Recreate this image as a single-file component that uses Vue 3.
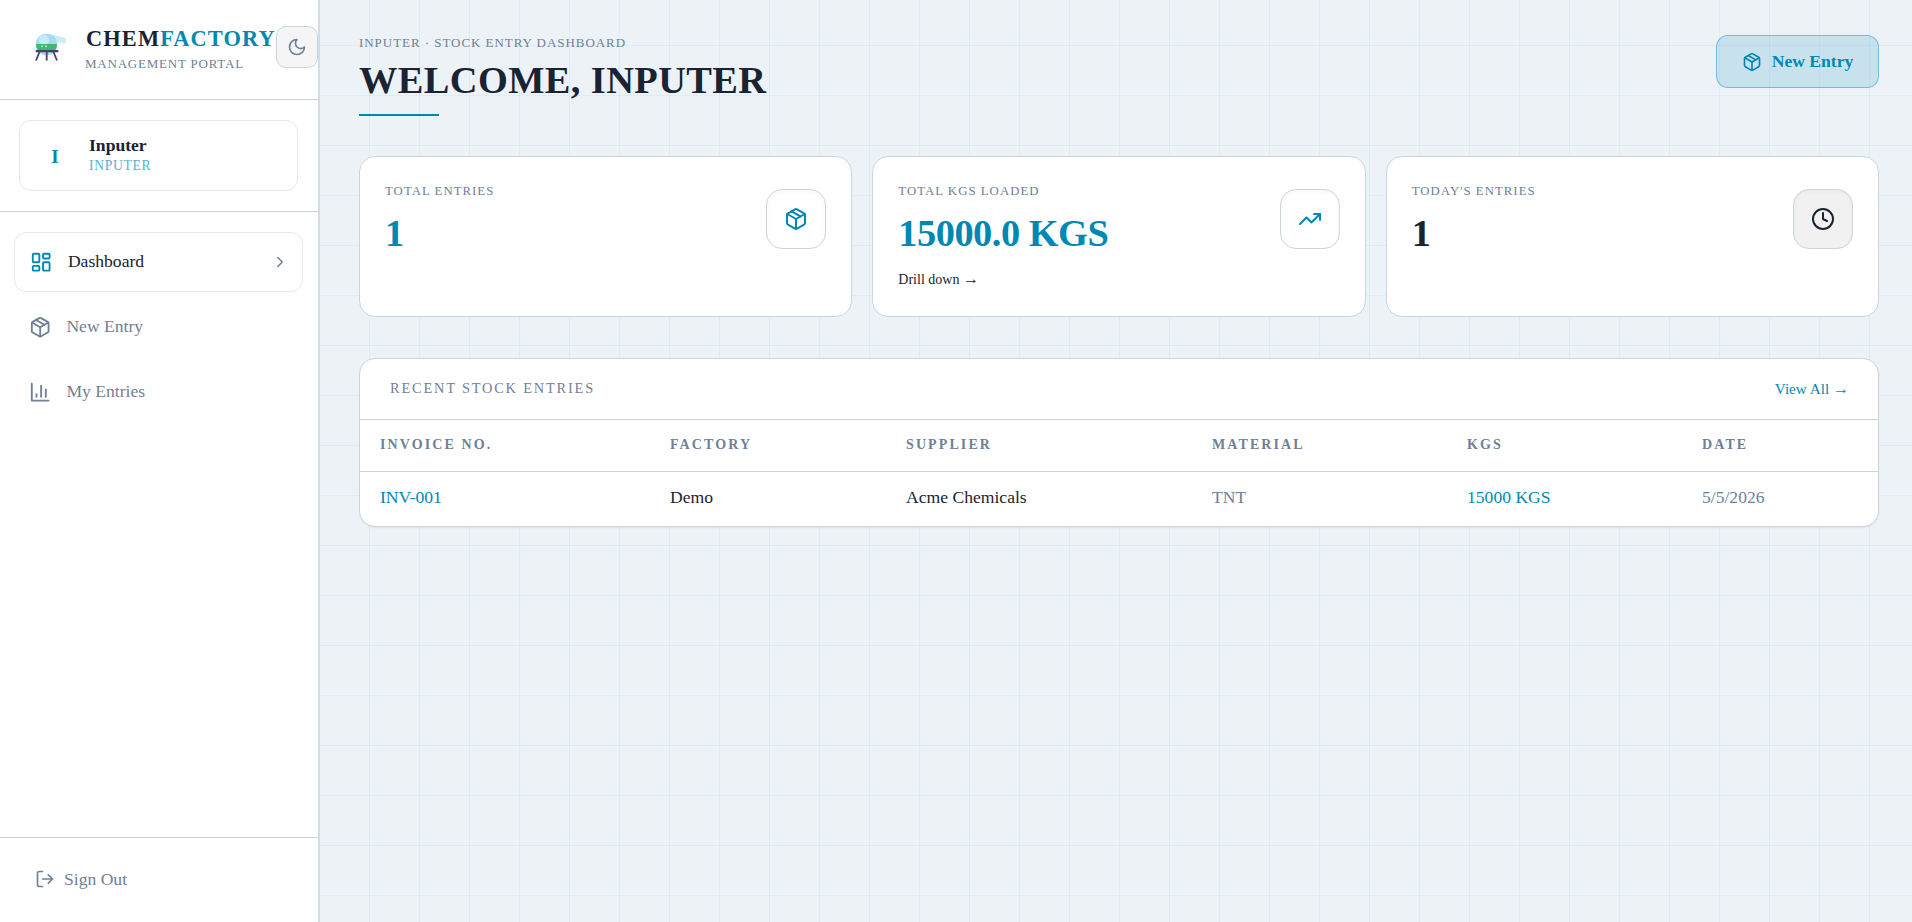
<template>
  <div class="layout">
    <aside class="sidebar">
      <div class="brand">
        <!-- flask logo -->
        <svg class="logo" viewBox="0 0 31 30" width="31" height="30">
          <path d="M15 1 L30.6 5 L30.6 10.5 L21 9 Z" fill="#c9eefa" />
          <circle cx="11.5" cy="11.5" r="10.8" fill="#a5dcf3" />
          <circle cx="9" cy="7" r="5" fill="#c6ebf8" />
          <path d="M1 11 H22 A10.8 10.8 0 0 1 20 17.5 H3 A10.8 10.8 0 0 1 1 11 Z" fill="#3cb96c" />
          <rect x="6" y="12.5" width="2" height="1.6" fill="#b9ecc4" />
          <rect x="10" y="12.5" width="2" height="1.6" fill="#b9ecc4" />
          <rect x="0.7" y="17" width="22.6" height="2.3" fill="#4b3f72" />
          <path d="M4.5 19 L1 27.5 M18.5 19 L22 27.5 M11.7 19 V27.5" stroke="#4b3f72" stroke-width="1.8" fill="none" />
        </svg>
        <div class="brand-text">
          <div class="brand-name">CHEM<span class="accent">FACTORY</span></div>
          <div class="brand-sub">MANAGEMENT PORTAL</div>
        </div>
        <button class="theme-btn">
          <svg class="ico" width="20" height="20" viewBox="0 0 24 24"><path d="M12 3a6 6 0 0 0 9 9 9 9 0 1 1-9-9Z" /></svg>
        </button>
      </div>

      <div class="user-wrap">
        <div class="user-card">
          <div class="avatar">I</div>
          <div>
            <div class="user-name">Inputer</div>
            <div class="user-role">INPUTER</div>
          </div>
        </div>
      </div>

      <nav class="nav">
        <a v-for="item in navItems" :key="item.label" class="nav-item" :class="{ active: item.active }">
          <svg class="ico nav-ico" width="22.4" height="22.4" viewBox="0 0 24 24">
            <path v-for="d in icons[item.icon]" :key="d" :d="d" />
          </svg>
          <span class="nav-label">{{ item.label }}</span>
          <svg v-if="item.active" class="ico chevron" width="18" height="18" viewBox="0 0 24 24"><path d="m9 18 6-6-6-6" /></svg>
        </a>
      </nav>

      <div class="signout">
        <svg class="ico" width="20" height="20" viewBox="0 0 24 24">
          <path d="M9 21H5a2 2 0 0 1-2-2V5a2 2 0 0 1 2-2h4" />
          <path d="m16 17 5-5-5-5" />
          <path d="M21 12H9" />
        </svg>
        <span>Sign Out</span>
      </div>
    </aside>

    <main class="main">
      <header class="page-head">
        <div>
          <div class="crumb">INPUTER · STOCK ENTRY DASHBOARD</div>
          <h1 class="title">WELCOME, INPUTER</h1>
          <div class="title-line"></div>
        </div>
        <button class="new-btn">
          <svg class="ico" width="20" height="20" viewBox="0 0 24 24">
            <path v-for="d in icons.package" :key="d" :d="d" />
          </svg>
          New Entry
        </button>
      </header>

      <section class="stats">
        <div v-for="card in stats" :key="card.label" class="stat-card">
          <div>
            <div class="stat-label">{{ card.label }}</div>
            <div class="stat-value" :class="card.tone">{{ card.value }}</div>
            <div v-if="card.drill" class="drill">Drill down <span class="arrow">→</span></div>
          </div>
          <div class="stat-icon" :class="card.tone">
            <svg class="ico" width="24" height="24" viewBox="0 0 24 24">
              <path v-for="d in icons[card.icon]" :key="d" :d="d" />
            </svg>
          </div>
        </div>
      </section>

      <section class="recent">
        <div class="recent-head">
          <span class="recent-title">RECENT STOCK ENTRIES</span>
          <a class="view-all">View All <span class="arrow">→</span></a>
        </div>
        <table class="entries">
          <colgroup>
            <col style="width: 290px" />
            <col style="width: 236px" />
            <col style="width: 306px" />
            <col style="width: 255px" />
            <col style="width: 235px" />
            <col />
          </colgroup>
          <thead>
            <tr>
              <th v-for="h in columns" :key="h">{{ h }}</th>
            </tr>
          </thead>
          <tbody>
            <tr v-for="row in rows" :key="row.invoice">
              <td class="teal">{{ row.invoice }}</td>
              <td>{{ row.factory }}</td>
              <td>{{ row.supplier }}</td>
              <td class="muted">{{ row.material }}</td>
              <td class="teal">{{ row.kgs }}</td>
              <td class="muted">{{ row.date }}</td>
            </tr>
          </tbody>
        </table>
      </section>
    </main>
  </div>
</template>

<script setup>
const icons = {
  dashboard: [
    'M4 3h5a1 1 0 0 1 1 1v7a1 1 0 0 1-1 1H4a1 1 0 0 1-1-1V4a1 1 0 0 1 1-1Z',
    'M15 3h5a1 1 0 0 1 1 1v3a1 1 0 0 1-1 1h-5a1 1 0 0 1-1-1V4a1 1 0 0 1 1-1Z',
    'M15 12h5a1 1 0 0 1 1 1v7a1 1 0 0 1-1 1h-5a1 1 0 0 1-1-1v-7a1 1 0 0 1 1-1Z',
    'M4 16h5a1 1 0 0 1 1 1v3a1 1 0 0 1-1 1H4a1 1 0 0 1-1-1v-3a1 1 0 0 1 1-1Z'
  ],
  package: [
    'm7.5 4.27 9 5.15',
    'M21 8a2 2 0 0 0-1-1.73l-7-4a2 2 0 0 0-2 0l-7 4A2 2 0 0 0 3 8v8a2 2 0 0 0 1 1.73l7 4a2 2 0 0 0 2 0l7-4A2 2 0 0 0 21 16Z',
    'm3.3 7 8.7 5 8.7-5',
    'M12 22V12'
  ],
  chart: ['M3 3v18h18', 'M18 17V9', 'M13 17V5', 'M8 17v-3'],
  trending: ['m22 7-8.5 8.5-5-5L2 17', 'M16 7h6v6'],
  clock: ['M12 2a10 10 0 1 0 0 20 10 10 0 0 0 0-20Z', 'M12 6v6l4 2']
}

const navItems = [
  { label: 'Dashboard', icon: 'dashboard', active: true },
  { label: 'New Entry', icon: 'package' },
  { label: 'My Entries', icon: 'chart' }
]

const stats = [
  { label: 'TOTAL ENTRIES', value: '1', icon: 'package', tone: 'teal' },
  { label: 'TOTAL KGS LOADED', value: '15000.0 KGS', icon: 'trending', tone: 'teal', drill: true },
  { label: "TODAY'S ENTRIES", value: '1', icon: 'clock', tone: 'dark' }
]

const columns = ['INVOICE NO.', 'FACTORY', 'SUPPLIER', 'MATERIAL', 'KGS', 'DATE']

const rows = [
  { invoice: 'INV-001', factory: 'Demo', supplier: 'Acme Chemicals', material: 'TNT', kgs: '15000 KGS', date: '5/5/2026' }
]
</script>

<style>
html,
body {
  margin: 0;
  overflow: hidden;
}
</style>

<style scoped>
.layout {
  display: flex;
  height: 922px;
  font-family: "Liberation Serif", "Times New Roman", serif;
  color: #1a2332;
}

.ico {
  fill: none;
  stroke: currentColor;
  stroke-width: 2;
  stroke-linecap: round;
  stroke-linejoin: round;
  flex-shrink: 0;
}

/* sidebar */
.sidebar {
  width: 320px;
  box-sizing: border-box;
  flex-shrink: 0;
  display: flex;
  flex-direction: column;
  background: #fff;
  border-right: 2px solid #d3dde7;
}

.brand {
  height: 100px;
  box-sizing: border-box;
  display: flex;
  align-items: flex-start;
  padding: 26px 0 0 35px;
  border-bottom: 1px solid #cbd5e0;
}

.logo {
  margin-top: 7px;
  margin-right: 20px;
  flex-shrink: 0;
}

.brand-name {
  font-size: 22.4px;
  font-weight: 700;
  letter-spacing: 0.05em;
  line-height: 25px;
}

.accent {
  color: #0088b3;
}

.brand-sub {
  margin: 5px 0 0 -1px;
  font-size: 13px;
  line-height: 15px;
  letter-spacing: 0.06em;
  color: #718096;
}

.theme-btn {
  width: 42px;
  height: 42px;
  flex-shrink: 0;
  padding: 0;
  display: flex;
  align-items: center;
  justify-content: center;
  background: #f5f5f6;
  border: 1px solid #cbd5e0;
  border-radius: 10px;
  color: #718096;
}

.user-wrap {
  height: 112px;
  box-sizing: border-box;
  padding: 20px 20px 0 19px;
  border-bottom: 1px solid #cbd5e0;
}

.user-card {
  height: 71px;
  box-sizing: border-box;
  display: flex;
  align-items: center;
  gap: 15px;
  padding: 0 16px;
  border: 1px solid #e2e8f0;
  border-radius: 12px;
}

.avatar {
  width: 38px;
  text-align: center;
  font-size: 19px;
  font-weight: 700;
  color: #0088b3;
  margin-top: 2px;
}

.user-name {
  font-size: 17.6px;
  font-weight: 700;
  line-height: 22px;
  margin-top: -3px;
}

.user-role {
  margin-top: 2px;
  font-size: 13.6px;
  line-height: 16px;
  letter-spacing: 0.05em;
  color: #55b2d2;
}

.nav {
  flex: 1;
  display: flex;
  flex-direction: column;
  gap: 5px;
  padding: 20px 0 0;
}

.nav-item {
  height: 60px;
  box-sizing: border-box;
  display: flex;
  align-items: center;
  gap: 15px;
  margin: 0 15px 0 16px;
  padding: 0 12px;
  font-size: 17.6px;
  color: #718096;
  border: 1px solid transparent;
  border-radius: 12px;
}

.nav-label {
  margin-top: -2px;
}

.nav-item.active {
  margin: 0 15px 0 14px;
  gap: 15.5px;
  padding: 0 13.5px 0 15px;
  color: #1a2332;
  border-color: #e2e8f0;
}

.active .nav-ico {
  color: #0088b3;
}

.chevron {
  margin-left: auto;
  color: #718096;
}

.signout {
  height: 85px;
  box-sizing: border-box;
  display: flex;
  align-items: center;
  gap: 9.5px;
  padding: 0 0 2px 34.5px;
  font-size: 17.6px;
  color: #718096;
  border-top: 1px solid #cbd5e0;
}

/* main */
.main {
  flex: 1;
  min-width: 0;
  box-sizing: border-box;
  padding: 35px 33px 0 39px;
  background-color: #ecf2f6;
  background-image:
    linear-gradient(rgba(0, 150, 170, 0.06) 1px, transparent 1px),
    linear-gradient(90deg, rgba(0, 150, 170, 0.06) 1px, transparent 1px);
  background-size: 50px 50px;
  background-position: 49px 45px;
}

.page-head {
  display: flex;
  justify-content: space-between;
  align-items: flex-start;
  height: 121px;
}

.crumb {
  font-size: 13px;
  line-height: 16px;
  letter-spacing: 0.073em;
  color: #718096;
}

.title {
  margin: 5px 0 0;
  font-size: 38.4px;
  line-height: 48px;
  font-weight: 700;
  letter-spacing: 0.4px;
}

.title-line {
  width: 80px;
  height: 2px;
  margin-top: 10px;
  background: #0088b3;
}

.new-btn {
  width: 163px;
  height: 53px;
  box-sizing: border-box;
  display: flex;
  align-items: center;
  justify-content: center;
  gap: 10px;
  padding: 0;
  font-family: inherit;
  font-size: 17.6px;
  font-weight: 700;
  color: #0088b3;
  background: rgba(0, 136, 190, 0.15);
  border: 1px solid rgba(0, 136, 190, 0.42);
  border-radius: 12px;
}

.stats {
  display: grid;
  grid-template-columns: repeat(3, 1fr);
  gap: 20px;
}

.stat-card {
  height: 161px;
  box-sizing: border-box;
  display: flex;
  justify-content: space-between;
  align-items: flex-start;
  padding: 26px 25px 0 25px;
  background: #fff;
  border: 1px solid #cbd5e0;
  border-radius: 16px;
}

.stat-label {
  font-size: 12.8px;
  line-height: 16px;
  letter-spacing: 0.08em;
  color: #718096;
}

.stat-value {
  margin-top: 11px;
  font-size: 38.4px;
  line-height: 46px;
  font-weight: 700;
  letter-spacing: -0.5px;
}

.stat-value.teal {
  color: #0088b3;
}

.drill {
  margin-top: 16px;
  font-size: 14px;
  line-height: 16px;
  color: #1a2332;
}

.drill .arrow {
  font-size: 16px;
  line-height: 14px;
}

.stat-icon {
  width: 60px;
  height: 60px;
  margin-top: 6px;
  box-sizing: border-box;
  display: flex;
  align-items: center;
  justify-content: center;
  background: #fff;
  border: 1px solid #cbd5e0;
  border-radius: 16px;
  box-shadow: inset 0 2px 4px rgba(0, 0, 0, 0.03);
}

.stat-icon.teal {
  color: #0088b3;
}

.stat-icon.dark {
  color: #1a2332;
  background: #f1f1f2;
}

.recent {
  margin-top: 41px;
  background: #fff;
  border: 1px solid #cbd5e0;
  border-radius: 16px;
  overflow: hidden;
  box-shadow: 0 1px 2px rgba(0, 0, 0, 0.06);
}

.recent-head {
  height: 61px;
  box-sizing: border-box;
  display: flex;
  align-items: center;
  justify-content: space-between;
  padding: 0 29px 1px 30px;
  border-bottom: 1px solid #cbd5e0;
}

.recent-title {
  font-size: 14.4px;
  letter-spacing: 0.125em;
  color: #718096;
}

.view-all {
  font-size: 15.2px;
  color: #0088b3;
}

.view-all .arrow {
  font-size: 16px;
  line-height: 14px;
}

.entries {
  width: 100%;
  table-layout: fixed;
  border-collapse: collapse;
}

.entries th {
  height: 51px;
  padding: 0 20px;
  box-sizing: border-box;
  text-align: left;
  font-size: 14px;
  font-weight: 700;
  letter-spacing: 0.15em;
  color: #718096;
  border-bottom: 1px solid #cbd5e0;
}

.entries td {
  height: 55px;
  box-sizing: border-box;
  padding: 0 20px 2px;
  font-size: 17.6px;
  color: #1a2332;
}

.entries td.teal {
  color: #0088b3;
}

.entries td.muted {
  color: #718096;
}
</style>
